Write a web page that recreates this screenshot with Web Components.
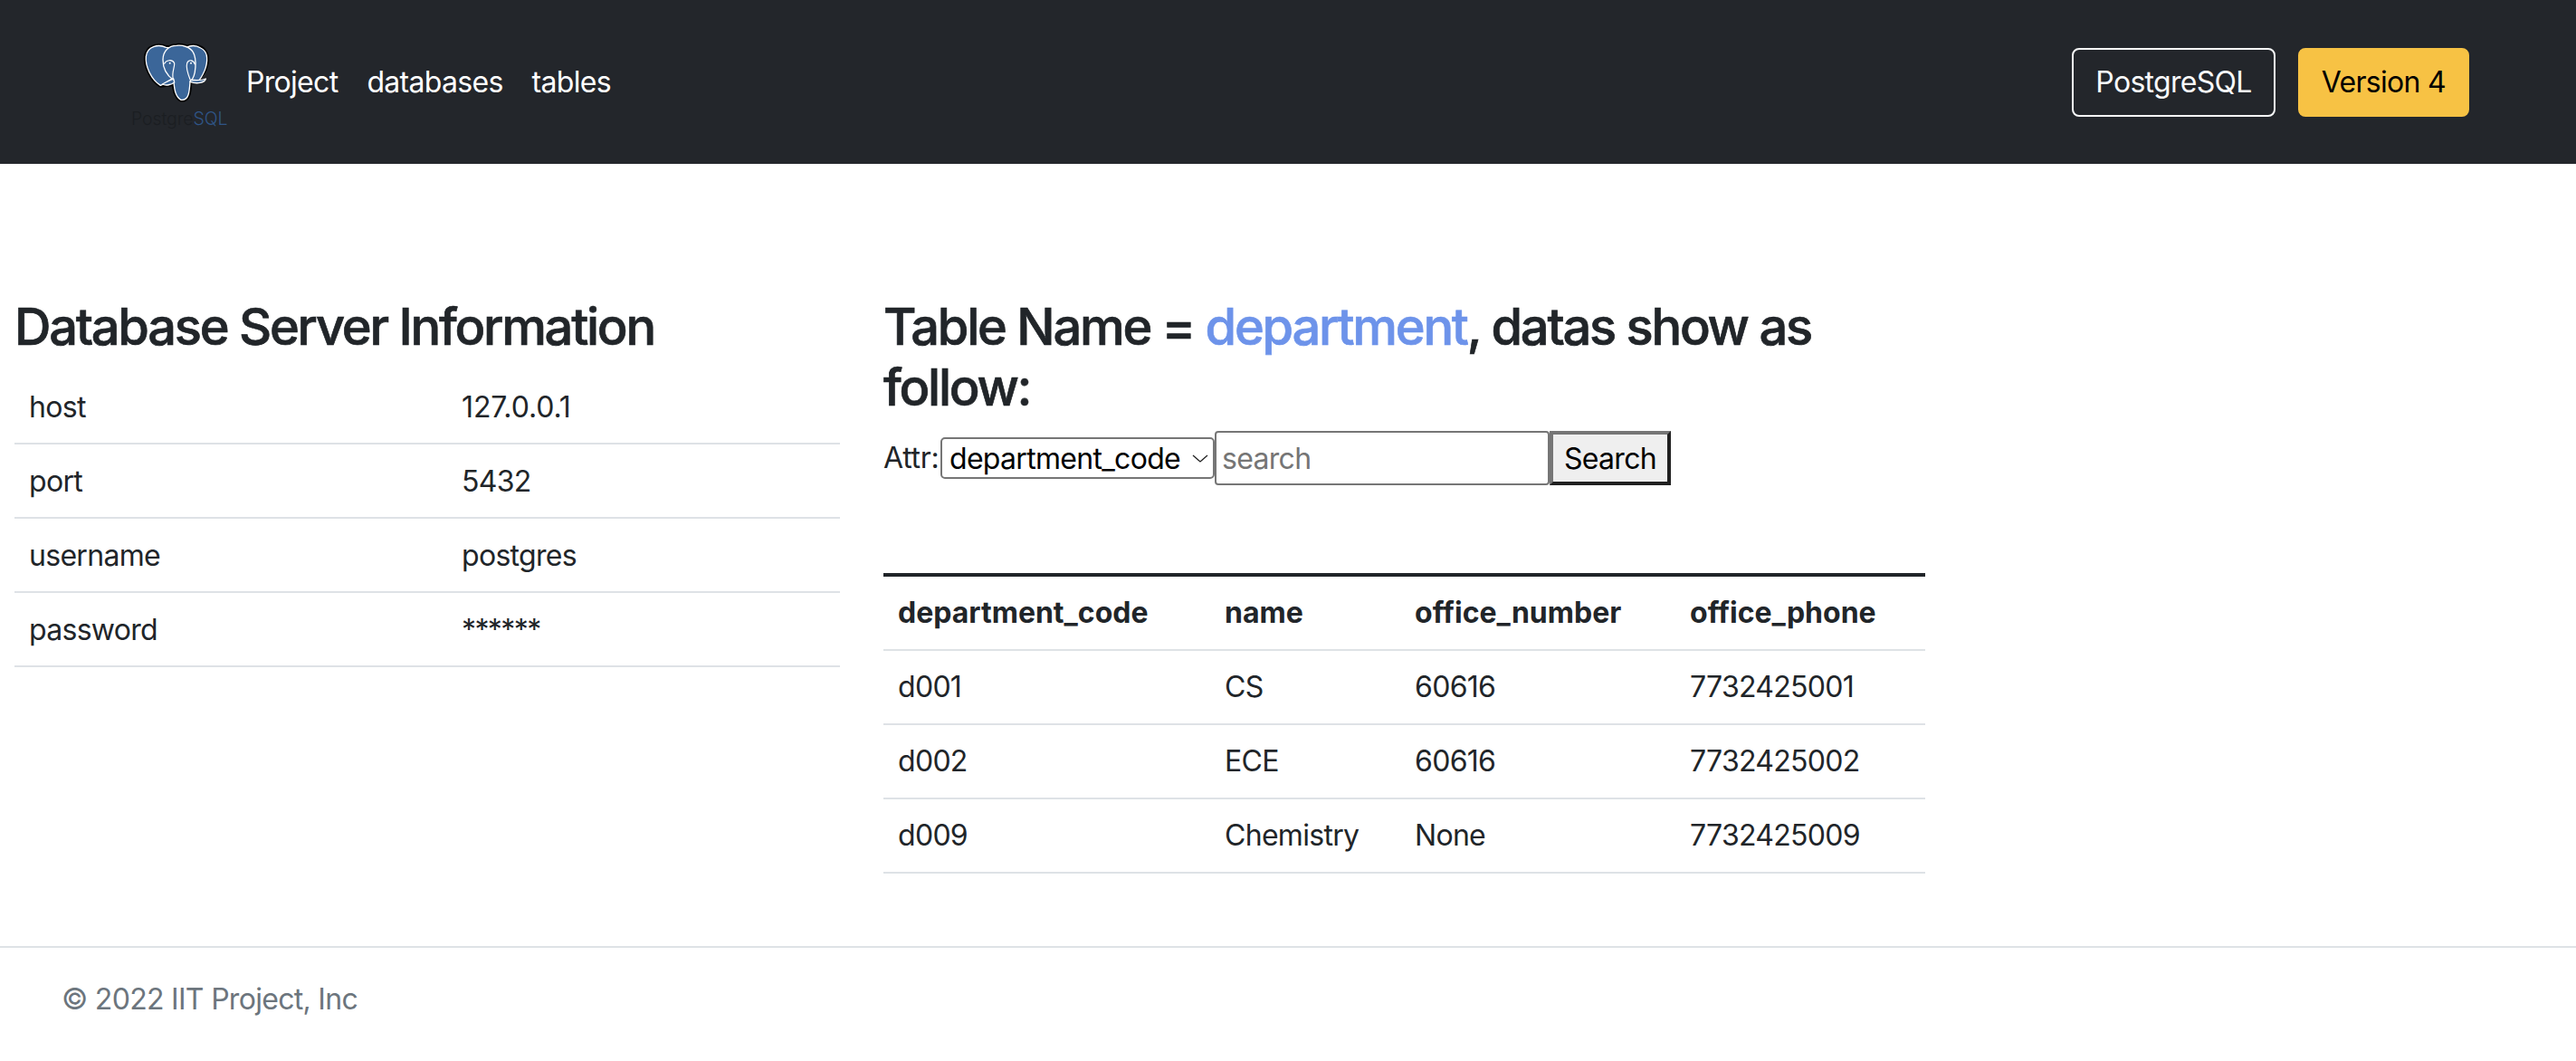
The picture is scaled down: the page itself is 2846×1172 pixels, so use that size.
<!DOCTYPE html>
<html lang="en"><head><meta charset="utf-8"><title>Database</title>
<style>
html,body{margin:0;padding:0;background:#fff;color:#212529;font-family:Inter,"Liberation Sans",sans-serif;font-size:32px;line-height:48px;letter-spacing:-.7px}
</style></head><body>
<app-navbar></app-navbar>
<app-main>
  <info-panel slot="left"></info-panel>
  <table-panel slot="right"></table-panel>
</app-main>
<app-footer>© 2022 IIT Project, Inc</app-footer>
<script>
function el(tpl){const t=document.createElement('template');t.innerHTML=tpl;return t.content.cloneNode(true)}
class Base extends HTMLElement{constructor(){super();this.attachShadow({mode:'open'}).appendChild(el(this.constructor.html))}}
class PgLogo extends Base{static html=`<style>
:host{display:block;width:130px;height:120px;position:relative;flex:none}
svg{display:block;width:130px;height:120px}
.t{position:absolute;left:15px;top:86px;font:300 19.5px/28px Inter,sans-serif;letter-spacing:-.1px;color:#1b1e22;white-space:nowrap}
.t b{font-weight:300;color:#2f5587}
</style>
<svg viewBox="0 0 390 360" aria-hidden="true">
<g stroke-linejoin="round" stroke-linecap="round">
<path d="M160 64C135 52 98 60 94 94C91 125 110 170 142 190L240 178C262 170 285 160 292 125C300 100 297 72 268 62C255 57 240 58 228 64Z" fill="#000" stroke="#000" stroke-width="14"/>
<path d="M195 58C170 58 150 75 150 105C150 135 160 155 185 172C188 195 188 225 210 238C236 242 238 210 240 178C262 160 262 100 250 80C240 62 215 56 195 58Z" fill="#000" stroke="#000" stroke-width="14"/>
<path d="M160 64C135 52 98 60 94 94C91 125 110 170 142 190L175 175L230 70Z" fill="#3b6699" stroke="#fff" stroke-width="4"/>
<path d="M228 64C245 56 262 58 275 66C296 76 300 100 292 130C286 150 276 165 268 176L245 178Z" fill="#3b6699" stroke="#fff" stroke-width="4"/>
<path d="M195 58C170 58 150 75 150 105C150 135 160 155 185 172C188 195 188 225 210 238C236 242 238 210 240 178C262 160 262 100 250 80C240 62 215 56 195 58Z" fill="#3b6699" stroke="#fff" stroke-width="4"/>
<path d="M242 172C255 172 275 176 292 168C288 182 262 186 240 178Z" fill="#3b6699" stroke="#fff" stroke-width="4"/>
<path d="M185 168C170 172 160 180 148 186C160 192 178 188 188 180Z" fill="#3b6699" stroke="#fff" stroke-width="4"/>
<path d="M155 118C160 106 180 102 188 116C190 130 178 145 184 170" fill="none" stroke="#fff" stroke-width="3.5"/>
<path d="M240 170C232 150 226 130 230 116C236 102 252 106 256 120" fill="none" stroke="#fff" stroke-width="3.5"/>
<circle cx="173" cy="116" r="3" fill="#fff"/><circle cx="243" cy="116" r="3" fill="#fff"/>
</g></svg>
<span class="t">Postgre<b>SQL</b></span>`}
class NavLink extends Base{static html=`<style>:host{display:block;padding:0 16px;color:#fff;white-space:nowrap}</style><slot></slot>`}
class NavButton extends Base{static html=`<style>
:host{display:block;box-sizing:border-box;height:76px;padding:12px 24px;border:2px solid #f8f9fa;border-radius:8px;color:#f8f9fa;white-space:nowrap;line-height:48px}
:host([warn]){background:#f7c244;border-color:#f7c244;color:#000}
</style><slot></slot>`}
class AppNavbar extends Base{static html=`<style>
:host{display:flex;align-items:center;height:181px;background:#23262b;padding:0 118px 0 130px;box-sizing:border-box}
nav{display:flex;margin-left:-4px;font-size:32px}
.sp{flex:1}
.btns{display:flex;gap:25px}
</style><pg-logo></pg-logo><nav><nav-link>Project</nav-link><nav-link>databases</nav-link><nav-link>tables</nav-link></nav><div class="sp"></div>
<div class="btns"><nav-button>PostgreSQL</nav-button><nav-button warn>Version 4</nav-button></div>`}
class AppMain extends Base{static html=`<style>
:host{display:grid;grid-template-columns:912px 1151px;column-gap:48px;padding:145px 16px 80px;align-items:start}
</style><slot name="left"></slot><slot name="right"></slot>`}
class DbTable extends Base{static html=`<style>
:host{display:block}
table{border-collapse:collapse;width:100%;table-layout:fixed;font-size:32px}
td,th{padding:16px;line-height:48px;border-bottom:2px solid #dee2e6;text-align:left;font-weight:400;white-space:nowrap}
th{font-weight:700;letter-spacing:0}
thead tr{border-top:4px solid #212529}
:host([nudge]) td{padding:17px 16px 15px}
.wide{letter-spacing:-.1px}.tight{letter-spacing:-1.6px}
</style><table><colgroup></colgroup><thead></thead><tbody></tbody></table>`
  connectedCallback(){
    const d=JSON.parse(this.getAttribute('data-table'));const r=this.shadowRoot;
    r.querySelector('colgroup').innerHTML=d.cols.map(w=>`<col style="width:${w}px">`).join('');
    if(d.head)r.querySelector('thead').innerHTML='<tr>'+d.head.map(h=>`<th>${h}</th>`).join('')+'</tr>';
    const cls=c=>c==='127.0.0.1'?' class="wide"':c==='******'?' class="tight"':'';
    r.querySelector('tbody').innerHTML=d.rows.map(x=>'<tr>'+x.map(c=>`<td${cls(c)}>${c}</td>`).join('')+'</tr>').join('');
  }}
class PanelTitle extends Base{static html=`<style>
:host{display:block;font-size:56px;line-height:67.2px;font-weight:500;-webkit-text-stroke:.7px currentColor;letter-spacing:-2.25px;padding-top:2px;margin:0 0 14px}
</style><slot></slot>`}
class InfoPanel extends Base{static html=`<style>:host{display:block}</style>
<panel-title>Database Server Information</panel-title>
<db-table nudge data-table='{"cols":[478,434],"rows":[["host","127.0.0.1"],["port","5432"],["username","postgres"],["password","******"]]}'></db-table>`}
class SearchBar extends Base{static html=`<style>
:host{display:flex;align-items:center;height:60px;font-size:32px;color:#212529;white-space:nowrap}
.lbl{display:block;width:63px;flex:none;letter-spacing:-.3px}
.sel{position:relative;display:block}
select{display:block;appearance:none;-webkit-appearance:none;box-sizing:border-box;width:303px;height:46px;padding:2px 30px 0 8px;border:2px solid #767676;border-radius:5px;background:#fff;color:#000;font:32px/40px Inter,sans-serif;letter-spacing:-.7px}
.sel svg{position:absolute;right:7px;top:19px;width:18px;height:9px}
input{box-sizing:border-box;width:370px;height:60px;padding:0 6px;border:2px solid #767676;border-radius:4px;background:#fff;color:#000;font:32px Inter,sans-serif;letter-spacing:-.7px;outline:0;margin:0}
input::placeholder{color:#757575;opacity:1}
button{box-sizing:border-box;width:134px;height:60px;padding:0;border:4px solid;border-color:#767676 #212121 #212121 #767676;background:#efefef;color:#000;font:32px Inter,sans-serif;letter-spacing:-.7px;margin:0}
</style><span class="lbl">Attr:</span><span class="sel"><select aria-label="Attr"><option>department_code</option></select><svg viewBox="0 0 18 9"><path d="M1 1l8 7 8-7" fill="none" stroke="#222" stroke-width="1.3"/></svg></span><input placeholder="search"><button type="button">Search</button>`}
class TablePanel extends Base{static html=`<style>
:host{display:block}
.h{color:#6d93ea}
search-bar{margin-bottom:97px}
</style>
<panel-title>Table Name = <span class="h">department</span>, datas show as follow:</panel-title>
<search-bar></search-bar>
<db-table data-table='{"cols":[361,210,304,276],"head":["department_code","name","office_number","office_phone"],"rows":[["d001","CS","60616","7732425001"],["d002","ECE","60616","7732425002"],["d009","Chemistry","None","7732425009"]]}'></db-table>`}
class AppFooter extends Base{static html=`<style>
:host{display:block;border-top:2px solid #dee2e6;padding:33px 68px;color:#6c757d;font-size:32px;line-height:48px}
</style><slot></slot>`}
for(const [n,c] of Object.entries({'pg-logo':PgLogo,'nav-link':NavLink,'nav-button':NavButton,'db-table':DbTable,'panel-title':PanelTitle,'search-bar':SearchBar,'info-panel':InfoPanel,'table-panel':TablePanel,'app-navbar':AppNavbar,'app-main':AppMain,'app-footer':AppFooter}))customElements.define(n,c);
</script>
</body></html>
